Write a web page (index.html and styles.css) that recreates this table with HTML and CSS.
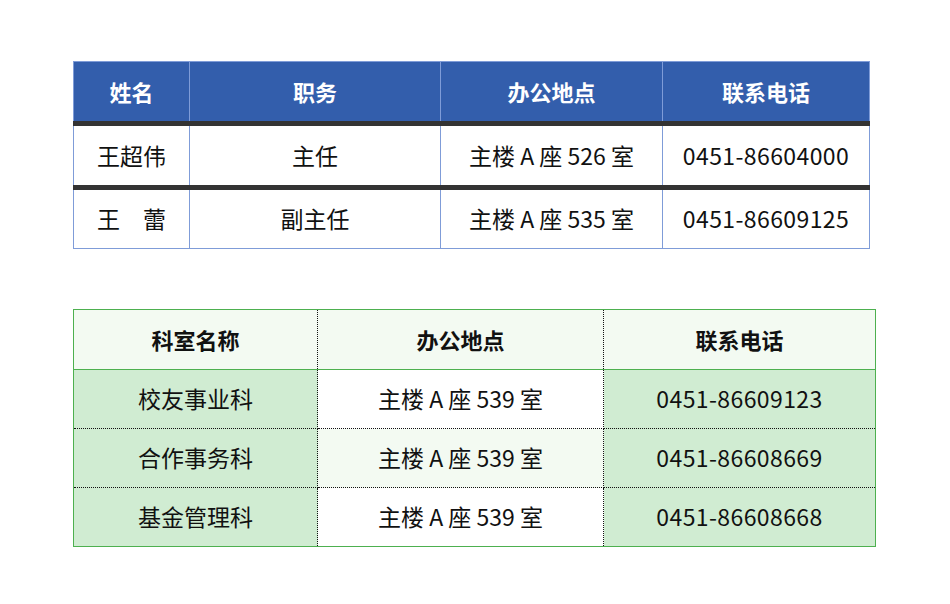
FILE: index.html
```html
<!DOCTYPE html>
<html lang="zh-CN">
<head>
<meta charset="utf-8">
<link rel="stylesheet" href="styles.css">
</head>
<body>
<div class="page">
  <table class="t1">
    <colgroup><col class="c1"><col class="c2"><col class="c3"><col class="c4"></colgroup>
    <thead>
      <tr><th>姓名</th><th>职务</th><th>办公地点</th><th>联系电话</th></tr>
    </thead>
    <tbody>
      <tr><td>王超伟</td><td>主任</td><td>主楼 A 座 526 室</td><td class="tel">0451-86604000</td></tr>
      <tr><td>王　蕾</td><td>副主任</td><td>主楼 A 座 535 室</td><td class="tel">0451-86609125</td></tr>
    </tbody>
  </table>

  <table class="t2">
    <colgroup><col class="d1"><col class="d2"><col class="d3"></colgroup>
    <thead>
      <tr><th>科室名称</th><th>办公地点</th><th>联系电话</th></tr>
    </thead>
    <tbody>
      <tr><td>校友事业科</td><td>主楼 A 座 539 室</td><td class="tel">0451-86609123</td></tr>
      <tr class="alt"><td>合作事务科</td><td>主楼 A 座 539 室</td><td class="tel">0451-86608669</td></tr>
      <tr><td>基金管理科</td><td>主楼 A 座 539 室</td><td class="tel">0451-86608668</td></tr>
    </tbody>
  </table>
</div>
</body>
</html>
```

FILE: styles.css
```css
html, body {
  margin: 0;
  padding: 0;
  background: #ffffff;
}

.page {
  padding: 61px 0 0 73px;
  font-family: "Microsoft YaHei", "Noto Sans CJK SC", "Noto Sans", sans-serif;
  color: #111111;
}

table {
  border-collapse: collapse;
  table-layout: fixed;
}

th, td {
  padding: 0 0 2px 0;
  text-align: center;
  vertical-align: middle;
  font-size: 23px;
  line-height: 26px;
}

th {
  font-size: 22px;
}

.tel {
  letter-spacing: 0.4px;
}

/* ---------- table 1 ---------- */
.t1 {
  width: 796px;
  border: 1px solid #7f9cd8;
}
.t1 .c1 { width: 116px; }
.t1 .c2 { width: 251px; }
.t1 .c3 { width: 222px; }
.t1 .c4 { width: 207px; }

.t1 th {
  background: #335eac;
  color: #ffffff;
  font-weight: 700;
  height: 57px;
  border-left: 1px solid #7f9cd8;
  border-right: 1px solid #7f9cd8;
  border-bottom: 5px solid #333333;
}
.t1 td {
  height: 57px;
  border-left: 1px solid #7f9cd8;
  border-right: 1px solid #7f9cd8;
  background: #ffffff;
}
.t1 tbody tr:first-child td {
  border-bottom: 5px solid #333333;
}
.t1 tbody tr:last-child td {
  height: 56px;
  border-bottom: 1px solid #7f9cd8;
}

/* ---------- table 2 ---------- */
.t2 {
  margin-top: 60px;
  width: 802px;
  border: 1px solid #4db04f;
}
.t2 .d1 { width: 244px; }
.t2 .d2 { width: 286px; }
.t2 .d3 { width: 272px; }

.t2 th {
  background: #f3faf2;
  color: #111111;
  font-weight: 700;
  height: 57px;
  border-bottom: 1px solid #4db04f;
  border-right: 1px dotted #111111;
}
.t2 th:last-child { border-right: 1px solid #4db04f; }

.t2 td {
  height: 56px;
  border-bottom: 1px dotted #111111;
  border-right: 1px dotted #111111;
  background: #ffffff;
}
.t2 td:first-child,
.t2 td:last-child {
  background: #d0ecd2;
}
.t2 td:last-child { border-right: 1px solid #4db04f; }
.t2 tr.alt td:nth-child(2) { background: #f3faf2; }
.t2 tbody tr:last-child td { border-bottom: 1px solid #4db04f; }
```
